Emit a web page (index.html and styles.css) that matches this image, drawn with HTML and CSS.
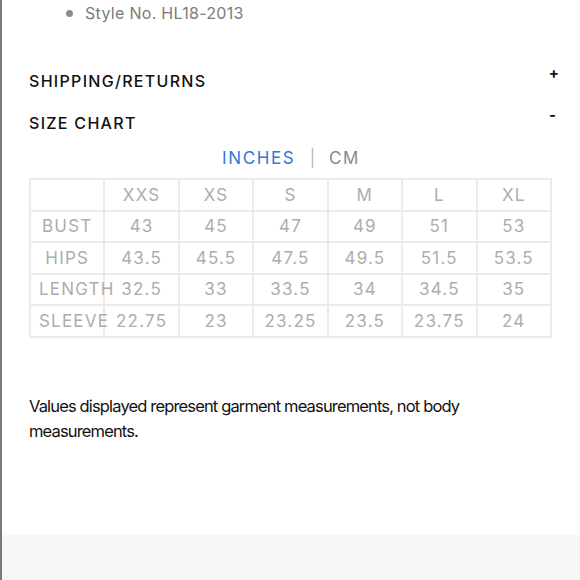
FILE: index.html
```html
<!DOCTYPE html>
<html>
<head>
<meta charset="utf-8">
<link rel="stylesheet" href="styles.css">
</head>
<body>
<div class="page">
  <main class="content">
    <ul class="details">
      <li>Style No. HL18-2013</li>
    </ul>
    <div class="acc-row acc-first">
      <span class="acc-title">SHIPPING/RETURNS</span>
      <span class="acc-icon plus">+</span>
    </div>
    <div class="acc-row">
      <span class="acc-title">SIZE CHART</span>
      <span class="acc-icon minus">-</span>
    </div>
    <div class="units">
      <span class="unit active">INCHES</span>
      <span class="sep">|</span>
      <span class="unit">CM</span>
    </div>
    <table class="chart">
      <tr><th></th><th>XXS</th><th>XS</th><th>S</th><th>M</th><th>L</th><th>XL</th></tr>
      <tr><td class="lbl">BUST</td><td>43</td><td>45</td><td>47</td><td>49</td><td>51</td><td>53</td></tr>
      <tr><td class="lbl">HIPS</td><td>43.5</td><td>45.5</td><td>47.5</td><td>49.5</td><td>51.5</td><td>53.5</td></tr>
      <tr><td class="lbl">LENGTH</td><td>32.5</td><td>33</td><td>33.5</td><td>34</td><td>34.5</td><td>35</td></tr>
      <tr><td class="lbl">SLEEVE</td><td>22.75</td><td>23</td><td>23.25</td><td>23.5</td><td>23.75</td><td>24</td></tr>
    </table>
    <p class="note">Values displayed represent garment measurements, not body measurements.</p>
  </main>
  <footer class="band"></footer>
</div>
</body>
</html>
```

FILE: styles.css
```css
html, body {
  margin: 0;
  padding: 0;
  background: #fff;
}
body {
  font-family: Inter, "Liberation Sans", sans-serif;
  color: #111;
}
.page {
  height: 580px;
  display: flex;
  flex-direction: column;
  border-left: 2px solid #7a7a7a;
  box-sizing: border-box;
}
.content {
  flex: 1;
  padding: 0 27px;
}
.details {
  margin: 0;
  padding: 3px 0 0 56px;
  font-size: 16px;
  letter-spacing: 0.3px;
  line-height: 20px;
  color: #7b7b7b;
}
.details li {
  list-style: none;
  position: relative;
}
.details li::before {
  content: "";
  position: absolute;
  left: -19px;
  top: 7px;
  width: 7px;
  height: 7px;
  border-radius: 50%;
  background: #8c8c8c;
}
.acc-row {
  display: flex;
  justify-content: space-between;
  align-items: center;
  height: 42px;
}
.acc-first {
  margin-top: 37px;
}
.acc-title {
  font-size: 16px;
  letter-spacing: 1.3px;
  font-weight: 500;
  color: #111;
}
.acc-icon {
  font-size: 15px;
  font-weight: 700;
  color: #111;
}
.plus { position: relative; top: -9px; margin-right: -6px; }
.minus { position: relative; top: -9px; margin-right: -3px; }
.units {
  text-align: center;
  font-size: 17px;
  letter-spacing: 1.6px;
  line-height: 20px;
  margin-top: 4px;
  color: #8a8a8a;
}
.unit.active { color: #2b7cd3; }
.sep { margin: 0 6px 0 8px; color: #aaa; font-weight: 300; }
.chart {
  margin-top: 10px;
  width: 523px;
  border-collapse: collapse;
  table-layout: fixed;
  border: 2px solid #ebebeb;
}
.chart th, .chart td {
  border: 2px solid #ebebeb;
  height: 29.5px;
  padding: 0 8px;
  text-align: center;
  font-size: 17px;
  font-weight: 400;
  letter-spacing: 1.2px;
  color: #adadad;
  white-space: nowrap;
  overflow: visible;
}
.note {
  margin: 56px 0 0;
  font-size: 16.5px;
  letter-spacing: -0.85px;
  line-height: 25px;
  color: #111;
}
.band {
  height: 45px;
  background: #f7f7f7;
}
```
